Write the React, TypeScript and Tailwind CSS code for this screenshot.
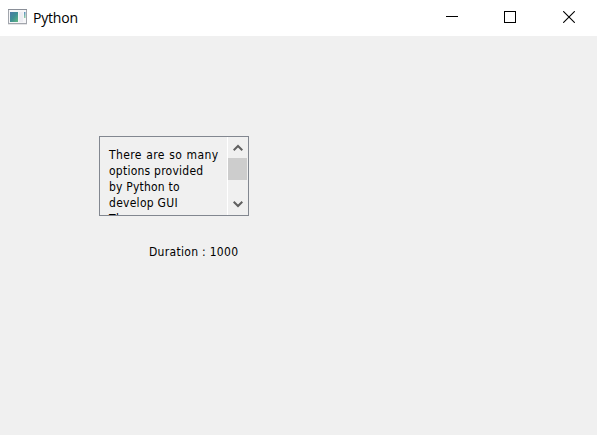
const lines = [
  { text: 'There are so many', spacing: 'tracking-[0.36px] [word-spacing:0.7px]' },
  { text: 'options provided', spacing: 'tracking-[0.24px]' },
  { text: 'by Python to', spacing: 'tracking-[0.2px]' },
  { text: 'develop GUI', spacing: 'tracking-[0.27px]' },
  { text: 'There', spacing: 'tracking-[0.3px]' },
];

function AppIcon() {
  return (
    <svg width="19" height="16" viewBox="0 0 19 16" className="shrink-0">
      <defs>
        <linearGradient id="pane" x1="0" y1="0" x2="1" y2="1">
          <stop offset="0" stopColor="#4a78a8" />
          <stop offset="0.5" stopColor="#3f8f94" />
          <stop offset="1" stopColor="#62b882" />
        </linearGradient>
        <linearGradient id="strip" x1="0" y1="0" x2="0" y2="1">
          <stop offset="0" stopColor="#5a8fc0" />
          <stop offset="1" stopColor="#8ed0a4" />
        </linearGradient>
      </defs>
      <rect x="0.5" y="0.5" width="18" height="14" fill="#f6f6f8" stroke="#a2a6ad" />
      <path d="M0 .5h19" stroke="#8a8f98" />
      <path d="M0 15.5h19" stroke="#e4e4e6" />
      <rect x="2" y="3" width="8" height="10" fill="url(#pane)" />
      <rect x="11" y="3" width="4" height="10" fill="#ececf2" />
      <rect x="16" y="3" width="1.5" height="6" fill="url(#strip)" />
    </svg>
  );
}

function TitleBar() {
  return (
    <header className="flex h-9 items-start bg-white pl-2">
      <div className="flex h-[34px] items-center gap-1.5">
        <AppIcon />
        <span className="pt-0.5 font-['Open_Sans','Noto_Sans',sans-serif] text-[14px] leading-5 tracking-[-0.2px] text-black">
          Python
        </span>
      </div>
      <div className="ml-auto flex h-[34px] items-center gap-[46px] pr-[22px] text-black">
        <svg width="12" height="12" className="-ml-px" shapeRendering="crispEdges"><path d="M0 5.5h12" stroke="currentColor" /></svg>
        <svg width="12" height="12" className="mr-px" shapeRendering="crispEdges"><rect x=".5" y=".5" width="11" height="11" fill="none" stroke="currentColor" /></svg>
        <svg width="12" height="12"><path d="M.2 .2l11.6 11.6M11.8 .2L.2 11.8" stroke="currentColor" strokeWidth="1.1" /></svg>
      </div>
    </header>
  );
}

function ScrollBar() {
  return (
    <div className="flex h-full w-[21px] shrink-0 flex-col items-center border-l border-white bg-[#f0f0f0] pr-px">
      <div className="flex h-[21px] items-center">
        <svg width="10" height="8"><path d="M.7 6.3L5 2l4.3 4.3" fill="none" stroke="#606060" strokeWidth="2" /></svg>
      </div>
      <div className="h-[22px] w-[19px] bg-[#cdcdcd]" />
      <div className="mb-px mt-auto flex h-[21px] items-center">
        <svg width="10" height="8"><path d="M.7 1.7L5 6l4.3-4.3" fill="none" stroke="#606060" strokeWidth="2" /></svg>
      </div>
    </div>
  );
}

export default function App() {
  return (
    <div className="flex h-[435px] w-[597px] flex-col overflow-hidden bg-[#f0f0f0] font-['DejaVu_Sans_Condensed','DejaVu_Sans',sans-serif] text-[12px] leading-4 text-black">
      <TitleBar />
      <main className="pl-[99px] pt-[100px]">
        <div className="flex h-20 w-[150px] overflow-hidden border border-[#828790]">
          <div className="flex-1 overflow-hidden whitespace-nowrap pl-[9px] pt-[10px]">
            {lines.map((line, i) => (
              <div key={i} className={line.spacing}>{line.text}</div>
            ))}
          </div>
          <ScrollBar />
        </div>
        <div className="ml-[50px] mt-7 tracking-[0.3px]">Duration : 1000</div>
      </main>
    </div>
  );
}
